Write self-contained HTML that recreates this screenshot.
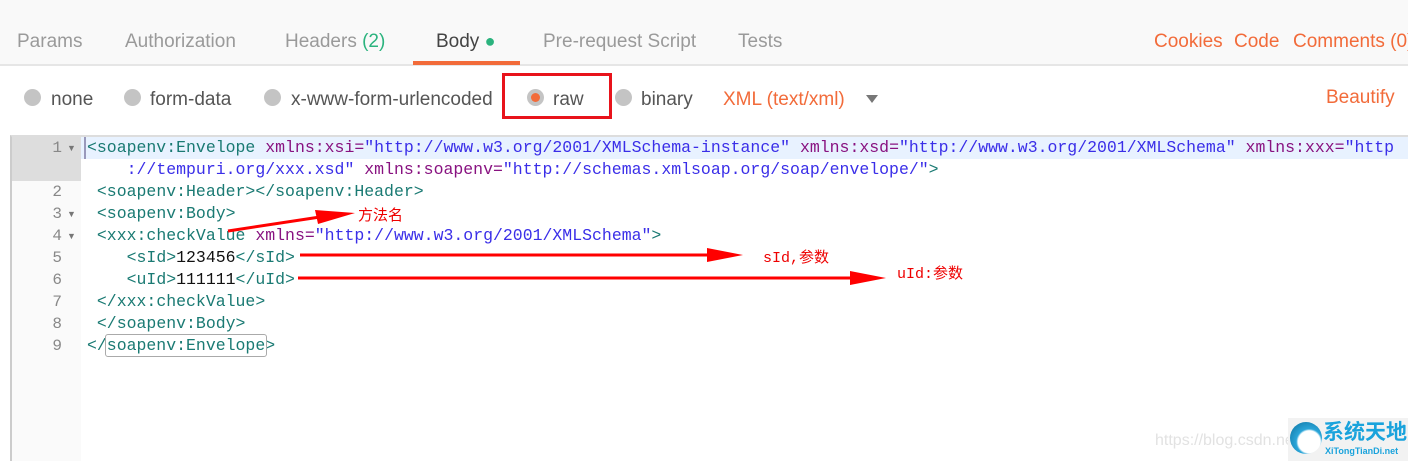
<!DOCTYPE html>
<html><head><meta charset="utf-8">
<style>
*{margin:0;padding:0;box-sizing:border-box}
body{width:1408px;height:461px;background:#fff;position:relative;overflow:hidden;font-family:"Liberation Sans","Noto Sans CJK SC",sans-serif}
.top{position:absolute;left:0;top:0;width:1408px;height:66px;background:#f9f9f9;border-bottom:2px solid #e6e6e6}
.t{position:absolute;top:31px;font-size:19px;color:#9a9a9a;white-space:nowrap}
.r{position:absolute;top:89px;font-size:19px;color:#555;white-space:nowrap}
.o{color:#f26b3a}
.dot{position:absolute;top:89px;width:17px;height:17px;border-radius:50%;background:#c4c4c4}
.ed{position:absolute;left:10px;top:135px;width:1398px;height:326px;border-top:2px solid #ddd;border-left:2px solid #ccc}
.gut{position:absolute;left:12px;top:137px;width:69px;height:324px;background:#fafafa}
.code{position:absolute;font-family:"Liberation Mono",monospace;font-size:16.5px;white-space:pre;line-height:22px}
.ln{position:absolute;left:28px;width:34px;text-align:right;font-family:"Liberation Mono",monospace;font-size:16px;color:#888;line-height:22px}
.tg{color:#1a7a73}.at{color:#881280}.st{color:#3a2ee8}.tx{color:#111}
.ar{position:absolute;font-size:9px;color:#777}
</style></head><body>
<div class="top"></div>
<div class="t" style="left:17px">Params</div>
<div class="t" style="left:125px">Authorization</div>
<div class="t" style="left:285px">Headers <span style="color:#2bb37e">(2)</span></div>
<div class="t" style="left:436px;color:#444">Body <span style="color:#2bb37e;font-size:18px">●</span></div>
<div style="position:absolute;left:413px;top:61px;width:107px;height:4px;background:#f26b3a"></div>
<div class="t" style="left:543px">Pre-request Script</div>
<div class="t" style="left:738px">Tests</div>
<div class="t o" style="left:1154px">Cookies</div>
<div class="t o" style="left:1234px">Code</div>
<div class="t o" style="left:1293px">Comments (0)</div>

<div class="dot" style="left:24px"></div><div class="r" style="left:51px">none</div>
<div class="dot" style="left:124px"></div><div class="r" style="left:150px">form-data</div>
<div class="dot" style="left:264px"></div><div class="r" style="left:291px">x-www-form-urlencoded</div>
<div style="position:absolute;left:502px;top:73px;width:110px;height:46px;border:3px solid #e8131b"></div>
<div class="dot" style="left:527px"></div><div style="position:absolute;left:531px;top:93px;width:9px;height:9px;border-radius:50%;background:#f26b3a"></div>
<div class="r" style="left:553px">raw</div>
<div class="dot" style="left:615px"></div><div class="r" style="left:641px">binary</div>
<div class="r o" style="left:723px">XML (text/xml)</div>
<div style="position:absolute;left:866px;top:95px;width:0;height:0;border-left:6px solid transparent;border-right:6px solid transparent;border-top:8px solid #777"></div>
<div class="r o" style="left:1326px;top:87px">Beautify</div>

<div class="ed"></div>
<div class="gut"></div>
<div style="position:absolute;left:12px;top:137px;width:69px;height:44px;background:#ddd"></div>
<div style="position:absolute;left:81px;top:137px;width:1327px;height:22px;background:#e8f2ff"></div>
<div style="position:absolute;left:84px;top:137px;width:2px;height:22px;background:#99b"></div>

<div class="ln" style="top:137px">1</div>
<div class="ln" style="top:181px">2</div>
<div class="ln" style="top:203px">3</div>
<div class="ln" style="top:225px">4</div>
<div class="ln" style="top:247px">5</div>
<div class="ln" style="top:269px">6</div>
<div class="ln" style="top:291px">7</div>
<div class="ln" style="top:313px">8</div>
<div class="ln" style="top:335px">9</div>
<div class="ar" style="left:67px;top:143px">▼</div>
<div class="ar" style="left:67px;top:209px">▼</div>
<div class="ar" style="left:67px;top:231px">▼</div>

<div class="code" style="left:87px;top:137px"><span class="tg">&lt;soapenv:Envelope</span> <span class="at">xmlns:xsi=</span><span class="st">"http://www.w3.org/2001/XMLSchema-instance"</span> <span class="at">xmlns:xsd=</span><span class="st">"http://www.w3.org/2001/XMLSchema"</span> <span class="at">xmlns:xxx=</span><span class="st">"http</span></div>
<div class="code" style="left:87px;top:159px">    <span class="st">://tempuri.org/xxx.xsd"</span> <span class="at">xmlns:soapenv=</span><span class="st">"http://schemas.xmlsoap.org/soap/envelope/"</span><span class="tg">&gt;</span></div>
<div class="code" style="left:87px;top:181px"> <span class="tg">&lt;soapenv:Header&gt;&lt;/soapenv:Header&gt;</span></div>
<div class="code" style="left:87px;top:203px"> <span class="tg">&lt;soapenv:Body&gt;</span></div>
<div class="code" style="left:87px;top:225px"> <span class="tg">&lt;xxx:checkValue</span> <span class="at">xmlns=</span><span class="st">"http://www.w3.org/2001/XMLSchema"</span><span class="tg">&gt;</span></div>
<div class="code" style="left:87px;top:247px">    <span class="tg">&lt;sId&gt;</span><span class="tx">123456</span><span class="tg">&lt;/sId&gt;</span></div>
<div class="code" style="left:87px;top:269px">    <span class="tg">&lt;uId&gt;</span><span class="tx">111111</span><span class="tg">&lt;/uId&gt;</span></div>
<div class="code" style="left:87px;top:291px"> <span class="tg">&lt;/xxx:checkValue&gt;</span></div>
<div class="code" style="left:87px;top:313px"> <span class="tg">&lt;/soapenv:Body&gt;</span></div>
<div class="code" style="left:87px;top:335px"><span class="tg">&lt;/soapenv:Envelope&gt;</span></div>
<div style="position:absolute;left:105px;top:334px;width:162px;height:23px;border:1px solid #aaa;border-radius:3px"></div>

<svg style="position:absolute;left:0;top:0" width="1408" height="461">
<line x1="228" y1="231" x2="320" y2="217" stroke="#f00" stroke-width="3"/>
<polygon points="315,210 355,213 318,224" fill="#f00"/>
<line x1="300" y1="255" x2="710" y2="255" stroke="#f00" stroke-width="3"/>
<polygon points="707,248 743,255 707,262" fill="#f00"/>
<line x1="298" y1="278" x2="852" y2="278" stroke="#f00" stroke-width="3"/>
<polygon points="850,271 886,278 850,285" fill="#f00"/>
</svg>
<div style="position:absolute;left:358px;top:204px;font-size:15px;color:#e00;font-family:'Noto Sans CJK SC',sans-serif">方法名</div>
<div style="position:absolute;left:763px;top:246px;font-size:15px;color:#e00;font-family:'Liberation Mono','Noto Sans CJK SC',monospace">sId,参数</div>
<div style="position:absolute;left:897px;top:262px;font-size:15px;color:#e00;font-family:'Liberation Mono','Noto Sans CJK SC',monospace">uId:参数</div>

<div style="position:absolute;left:1155px;top:432px;font-size:16px;color:#e2e2e2">https://blog.csdn.net</div>
<div style="position:absolute;left:1288px;top:418px;width:120px;height:43px;background:#f2f2f2"></div>
<div style="position:absolute;left:1290px;top:422px;width:32px;height:32px;border-radius:50%;background:radial-gradient(circle at 60% 62%,#fff 40%,#2aa5d8 47%,#0c6d9a 100%)"></div>
<div style="position:absolute;left:1323px;top:418px;font-size:21px;font-weight:bold;color:#1aa3dc;font-family:'Noto Sans CJK SC',sans-serif;line-height:26px">系统天地</div>
<div style="position:absolute;left:1325px;top:446px;font-size:9px;font-weight:bold;color:#1aa3dc">XiTongTianDi.net</div>
</body></html>
